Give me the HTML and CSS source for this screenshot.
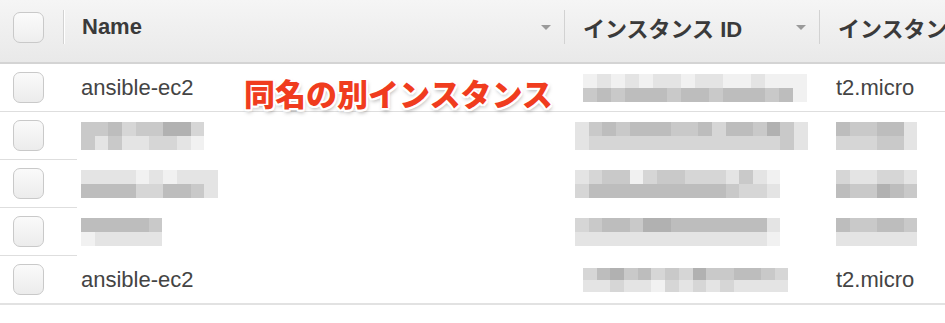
FILE: index.html
```html
<!DOCTYPE html>
<html lang="ja">
<head>
<meta charset="utf-8">
<link rel="stylesheet" href="styles.css">
</head>
<body>
<div class="table">
  <div class="thead">
    <div class="cell check-cell"><span class="cbox head-box"></span><span class="sep"></span></div>
    <div class="cell hcell"><span class="htext">Name</span><span class="arrow"></span><span class="sep"></span></div>
    <div class="cell hcell"><span class="htext">インスタンス ID</span><span class="arrow"></span><span class="sep"></span></div>
    <div class="cell hcell"><span class="htext">インスタンスタイプ</span></div>
  </div>

  <div class="row">
    <div class="cell check-cell"><span class="cbox"></span></div>
    <div class="cell name">ansible-ec2</div>
    <div class="cell idc">
      <div class="mosaic c16">
        <i class="m0"></i><i class="m1"></i><i class="m0"></i><i class="m1"></i><i class="m0"></i><i class="m1"></i><i class="m1"></i><i class="m0"></i><i class="m1"></i><i class="m1"></i><i class="m0"></i><i class="m0"></i><i class="m1"></i><i class="m0"></i><i class="m0"></i><i class="m0"></i>
        <i class="m3"></i><i class="m4"></i><i class="m3"></i><i class="m4"></i><i class="m4"></i><i class="m4"></i><i class="m3"></i><i class="m4"></i><i class="m4"></i><i class="m3"></i><i class="m4"></i><i class="m4"></i><i class="m4"></i><i class="m3"></i><i class="m4"></i><i class="m0"></i>
      </div>
    </div>
    <div class="cell type">t2.micro</div>
  </div>

  <div class="row blurred">
    <div class="cell check-cell"><span class="cbox"></span></div>
    <div class="cell name">
      <div class="mosaic c9">
        <i class="m3"></i><i class="m3"></i><i class="m4"></i><i class="m2"></i><i class="m3"></i><i class="m3"></i><i class="m5"></i><i class="m5"></i><i class="m2"></i>
        <i class="m3"></i><i class="m1"></i><i class="m3"></i><i class="m1"></i><i class="m1"></i><i class="m2"></i><i class="m2"></i><i class="m1"></i><i class="m0"></i>
      </div>
    </div>
    <div class="cell idc shift">
      <div class="mosaic c17">
        <i class="m1"></i><i class="m3"></i><i class="m4"></i><i class="m3"></i><i class="m4"></i><i class="m4"></i><i class="m4"></i><i class="m3"></i><i class="m3"></i><i class="m4"></i><i class="m2"></i><i class="m4"></i><i class="m4"></i><i class="m3"></i><i class="m5"></i><i class="m3"></i><i class="m1"></i>
        <i class="m1"></i><i class="m2"></i><i class="m2"></i><i class="m2"></i><i class="m2"></i><i class="m2"></i><i class="m2"></i><i class="m2"></i><i class="m2"></i><i class="m2"></i><i class="m2"></i><i class="m2"></i><i class="m2"></i><i class="m2"></i><i class="m2"></i><i class="m3"></i><i class="m1"></i>
      </div>
    </div>
    <div class="cell type">
      <div class="mosaic c6">
        <i class="m4"></i><i class="m3"></i><i class="m3"></i><i class="m4"></i><i class="m4"></i><i class="m1"></i>
        <i class="m2"></i><i class="m2"></i><i class="m2"></i><i class="m3"></i><i class="m3"></i><i class="m1"></i>
      </div>
    </div>
  </div>

  <div class="row blurred">
    <div class="cell check-cell"><span class="cbox"></span></div>
    <div class="cell name">
      <div class="mosaic c10">
        <i class="m1"></i><i class="m1"></i><i class="m1"></i><i class="m1"></i><i class="m0"></i><i class="m1"></i><i class="m0"></i><i class="m1"></i><i class="m1"></i><i class="m1"></i>
        <i class="m4"></i><i class="m4"></i><i class="m4"></i><i class="m4"></i><i class="m2"></i><i class="m2"></i><i class="m4"></i><i class="m4"></i><i class="m3"></i><i class="m1"></i>
      </div>
    </div>
    <div class="cell idc shift">
      <div class="mosaic c15">
        <i class="m1"></i><i class="m2"></i><i class="m3"></i><i class="m3"></i><i class="m0"></i><i class="m2"></i><i class="m3"></i><i class="m3"></i><i class="m2"></i><i class="m2"></i><i class="m2"></i><i class="m1"></i><i class="m3"></i><i class="m1"></i><i class="m0"></i>
        <i class="m2"></i><i class="m4"></i><i class="m4"></i><i class="m4"></i><i class="m4"></i><i class="m4"></i><i class="m4"></i><i class="m4"></i><i class="m4"></i><i class="m4"></i><i class="m4"></i><i class="m3"></i><i class="m2"></i><i class="m2"></i><i class="m1"></i>
      </div>
    </div>
    <div class="cell type">
      <div class="mosaic c6">
        <i class="m2"></i><i class="m1"></i><i class="m1"></i><i class="m2"></i><i class="m2"></i><i class="m1"></i>
        <i class="m4"></i><i class="m3"></i><i class="m3"></i><i class="m5"></i><i class="m4"></i><i class="m3"></i>
      </div>
    </div>
  </div>

  <div class="row blurred">
    <div class="cell check-cell"><span class="cbox"></span></div>
    <div class="cell name">
      <div class="mosaic c6">
        <i class="m4"></i><i class="m4"></i><i class="m4"></i><i class="m4"></i><i class="m4"></i><i class="m3"></i>
        <i class="m0"></i><i class="m1"></i><i class="m1"></i><i class="m1"></i><i class="m1"></i><i class="m1"></i>
      </div>
    </div>
    <div class="cell idc shift">
      <div class="mosaic c15">
        <i class="m2"></i><i class="m3"></i><i class="m4"></i><i class="m4"></i><i class="m3"></i><i class="m5"></i><i class="m5"></i><i class="m4"></i><i class="m4"></i><i class="m4"></i><i class="m4"></i><i class="m4"></i><i class="m4"></i><i class="m4"></i><i class="m1"></i>
        <i class="m1"></i><i class="m1"></i><i class="m1"></i><i class="m1"></i><i class="m1"></i><i class="m1"></i><i class="m1"></i><i class="m1"></i><i class="m1"></i><i class="m1"></i><i class="m1"></i><i class="m1"></i><i class="m1"></i><i class="m1"></i><i class="m0"></i>
      </div>
    </div>
    <div class="cell type">
      <div class="mosaic c6">
        <i class="m4"></i><i class="m3"></i><i class="m3"></i><i class="m4"></i><i class="m4"></i><i class="m3"></i>
        <i class="m1"></i><i class="m1"></i><i class="m1"></i><i class="m1"></i><i class="m1"></i><i class="m1"></i>
      </div>
    </div>
  </div>

  <div class="row last">
    <div class="cell check-cell"><span class="cbox"></span></div>
    <div class="cell name">ansible-ec2</div>
    <div class="cell idc">
      <div class="mosaic c15 fine">
        <i class="m2"></i><i class="m4"></i><i class="m5"></i><i class="m3"></i><i class="m4"></i><i class="m2"></i><i class="m3"></i><i class="m2"></i><i class="m5"></i><i class="m3"></i><i class="m3"></i><i class="m4"></i><i class="m4"></i><i class="m3"></i><i class="m2"></i>
        <i class="m1"></i><i class="m1"></i><i class="m2"></i><i class="m1"></i><i class="m1"></i><i class="m0"></i><i class="m2"></i><i class="m1"></i><i class="m2"></i><i class="m1"></i><i class="m2"></i><i class="m1"></i><i class="m1"></i><i class="m1"></i><i class="m1"></i>
      </div>
    </div>
    <div class="cell type">t2.micro</div>
  </div>

  <div class="note">同名の別インスタンス</div>
</div>
</body>
</html>
```

FILE: styles.css
```css
html, body {
  margin: 0;
  padding: 0;
  background: #ffffff;
}

body {
  font-family: "Liberation Sans", Arial, "Noto Sans CJK JP", sans-serif;
  color: #444444;
  width: 945px;
  height: 323px;
  overflow: hidden;
}

.table {
  position: relative;
  width: 945px;
}

.thead,
.row {
  display: grid;
  grid-template-columns: 64px 501px 255px 1fr;
}

.thead {
  height: 62px;
  background: linear-gradient(#f5f5f5, #e9e9e9);
  border-bottom: 2px solid #d4d4d4;
}

.thead .cell {
  padding-bottom: 8px;
}

.cell {
  position: relative;
  display: flex;
  align-items: center;
  white-space: nowrap;
}

.check-cell {
  padding-left: 13px;
}

.cbox {
  display: block;
  width: 29px;
  height: 29px;
  border: 1px solid #c9c9c9;
  border-radius: 7px;
  background: linear-gradient(#fafafa, #ececec);
  box-sizing: content-box;
}

.head-box {
  background: linear-gradient(#fbfbfb, #eeeeee);
}

.sep {
  position: absolute;
  right: 0;
  top: 10px;
  width: 1px;
  height: 34px;
  background: #d2d2d2;
  box-shadow: 1px 0 0 #ffffff;
}

.hcell {
  padding-left: 18px;
  padding-right: 14px;
  justify-content: space-between;
  overflow: hidden;
}

.htext {
  font-weight: bold;
  font-size: 22px;
  color: #3a3a3a;
  font-family: "Liberation Sans", Arial, "Noto Sans CJK JP", sans-serif;
}

.arrow {
  width: 0;
  height: 0;
  border-left: 5px solid transparent;
  border-right: 5px solid transparent;
  border-top: 5px solid #9a9a9a;
  margin-top: 1px;
}

.row {
  height: 47px;
  border-bottom: 1px solid #dedede;
}

.row.blurred {
  border-bottom-color: transparent;
}

.row.blurred .check-cell {
  border-bottom: 1px solid #dedede;
  margin-bottom: -1px;
  width: 64px;
}

.row.last {
  border-bottom: 2px solid #e2e2e2;
}

.name {
  padding-left: 17px;
  font-size: 22px;
  color: #444444;
}

.idc {
  padding-left: 18px;
}

.idc.shift {
  padding-left: 10px;
}

.type {
  padding-left: 16px;
  font-size: 22px;
  color: #444444;
}

.mosaic {
  display: grid;
  grid-auto-rows: 14px;
  filter: blur(0.6px);
}

.mosaic.fine {
  grid-auto-rows: 12px;
}

.c6 { grid-template-columns: repeat(6, 13.5px); }
.c9 { grid-template-columns: repeat(9, 13.7px); }
.c10 { grid-template-columns: repeat(10, 13.7px); }
.c15 { grid-template-columns: repeat(15, 13.7px); }
.c16 { grid-template-columns: repeat(16, 14px); }
.c17 { grid-template-columns: repeat(17, 13.7px); }

.mosaic i { display: block; }
.m0 { background: #f1f1f1; }
.m1 { background: #e4e4e4; }
.m2 { background: #d6d6d6; }
.m3 { background: #c9c9c9; }
.m4 { background: #bdbdbd; }
.m5 { background: #b1b1b1; }

.note {
  position: absolute;
  left: 244px;
  top: 73px;
  font-family: "Noto Sans CJK JP", sans-serif;
  font-weight: 900;
  font-size: 31px;
  line-height: 40px;
  color: #f03c1e;
  text-shadow:
    -2px 0 0 #fff, 2px 0 0 #fff, 0 -2px 0 #fff, 0 2px 0 #fff,
    -1.5px -1.5px 0 #fff, 1.5px 1.5px 0 #fff, -1.5px 1.5px 0 #fff, 1.5px -1.5px 0 #fff,
    1px 3px 4px rgba(0, 0, 0, 0.35);
}
```
